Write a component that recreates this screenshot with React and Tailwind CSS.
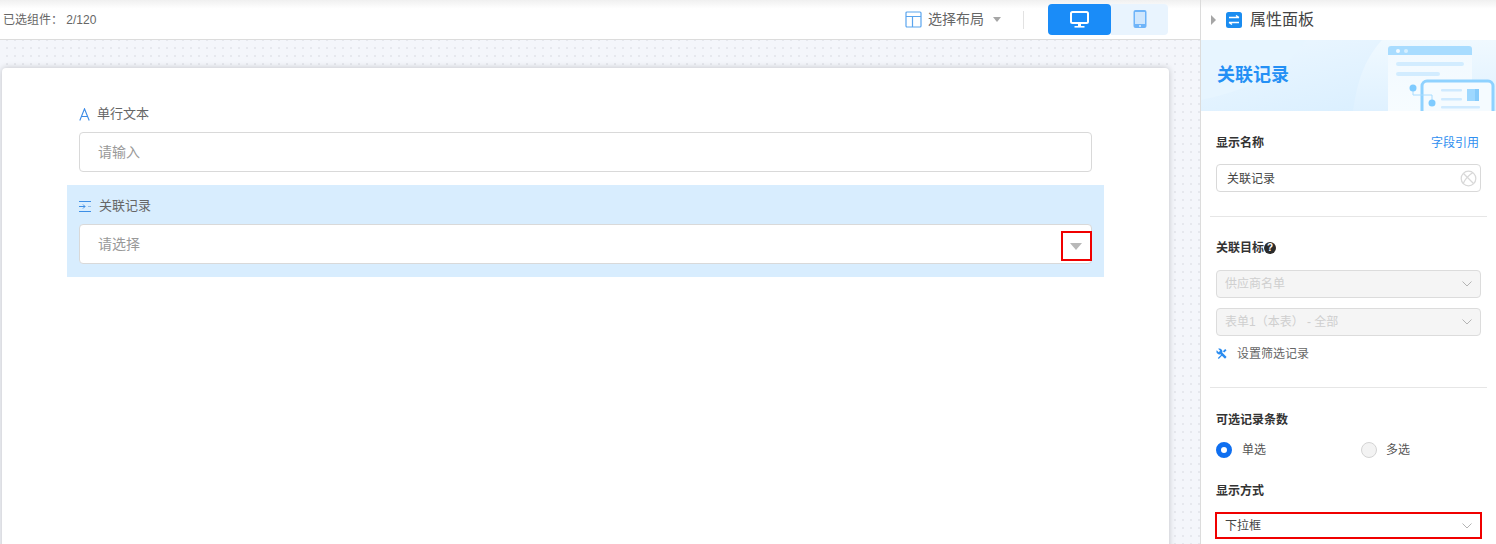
import React from "react";

const Chevron = () => (
  <svg width="10" height="6" viewBox="0 0 10 6" fill="none" stroke="#b4b4b4" strokeWidth="1">
    <path d="M0.5 0.5l4.5 4.5 4.5-4.5" />
  </svg>
);

const DisabledSelect = ({ text, className = "" }) => (
  <div className={"flex h-[28px] items-center justify-between rounded-[4px] border border-[#dcdcdc] bg-[#f5f5f5] pl-[8px] pr-[8px] text-[12px] text-[#cfcfcf] " + className}>
    <span>{text}</span>
    <Chevron />
  </div>
);

const Label = ({ children, className = "" }) => (
  <div className={"flex h-[18px] items-center text-[12px] font-bold leading-[18px] text-[#333] " + className}>{children}</div>
);

const Field = ({ icon, label, placeholder, active, labelGap, children }) => (
  <div className={"relative w-[1037px] pt-[12px] pb-[13px] px-[12px] " + (active ? "bg-[#d8edfe]" : "")}>
    <div className="mb-[9px] flex h-[18px] items-center text-[13px] text-[#666]">
      <span className={"flex w-[14px] justify-start " + labelGap}>{icon}</span>
      <span>{label}</span>
    </div>
    <div className="relative flex h-[40px] items-center rounded-[4px] border border-[#d9d9d9] bg-white pl-[18px] text-[14px] text-[#999]">
      {placeholder}
      {children}
    </div>
  </div>
);

function Banner() {
  return (
    <div className="relative h-[71px] overflow-hidden bg-[#e3f3ff]">
      <svg className="absolute inset-0" width="295" height="71" viewBox="0 0 295 71">
        <defs>
          <linearGradient id="bgA" x1="0" y1="0" x2="0" y2="1">
            <stop offset="0" stopColor="#f0f9ff" />
            <stop offset="1" stopColor="#dff1ff" />
          </linearGradient>
          <linearGradient id="bgB" x1="0" y1="0" x2="1" y2="1">
            <stop offset="0" stopColor="#edf7ff" />
            <stop offset="1" stopColor="#d5edff" />
          </linearGradient>
          <linearGradient id="win" x1="0" y1="0" x2="0" y2="1">
            <stop offset="0" stopColor="#f1f9ff" />
            <stop offset="1" stopColor="#f7fcff" />
          </linearGradient>
        </defs>
        <rect width="295" height="71" fill="url(#bgB)" />
        <path d="M0 0H105C85 30 55 48 0 60Z" fill="#e7f5ff" />
        <path d="M181 0H295V71H152C156 42 163 20 181 0Z" fill="url(#bgA)" />
        <path d="M187 9a3 3 0 0 1 3-3h78a3 3 0 0 1 3 3v62h-84z" fill="url(#win)" />
        <path d="M187 15V9a3 3 0 0 1 3-3h78a3 3 0 0 1 3 3v6z" fill="#a8dcff" />
        <circle cx="197" cy="11" r="2" fill="#f2faff" />
        <circle cx="205" cy="11" r="2" fill="#d6effF" />
        <rect x="195" y="22" width="68" height="4" rx="2" fill="#d2ecff" />
        <rect x="195" y="32" width="44" height="4" rx="2" fill="#d2ecff" />
        <path d="M221 75V46a5 5 0 0 1 5-5h61a5 5 0 0 1 5 5v29" fill="#f5fbff" stroke="#8fd2ff" strokeWidth="3" />
        <rect x="240" y="49" width="21" height="2.5" rx="1" fill="#cfeaff" />
        <rect x="240" y="58" width="21" height="2.5" rx="1" fill="#cfeaff" />
        <rect x="240" y="66" width="39" height="2.5" rx="1" fill="#cfeaff" />
        <rect x="266" y="49" width="12" height="12" fill="#9ed8ff" />
        <rect x="274" y="49" width="4" height="12" fill="#86cbfb" />
        <path d="M212 48v7h19v8" fill="none" stroke="#a8dcff" strokeWidth="1" />
        <circle cx="212" cy="48" r="3.5" fill="#7fcbff" />
        <circle cx="231" cy="63" r="3.5" fill="#7fcbff" />
      </svg>
      <div className="relative flex h-full items-center pl-[16px] text-[18px] font-bold text-[#2490f5]">关联记录</div>
    </div>
  );
}

export default function App() {
  return (
    <div className="flex h-[544px] w-[1496px] overflow-hidden bg-white font-['Liberation_Sans','Noto_Sans_CJK_SC',sans-serif]">
      {/* main */}
      <div className="flex w-[1200px] flex-col overflow-hidden">
        <div className="flex h-[40px] shrink-0 items-center justify-between border-b border-[#dcdcdc] bg-gradient-to-b from-[#f0f0f0] via-white via-[22%] to-white pl-[3px] pr-[32px]">
          <div className="text-[12px] text-[#666]">已选组件：&nbsp;2/120</div>
          <div className="flex items-center">
            <svg width="17" height="17" viewBox="0 0 17 17" fill="none" stroke="#5aa5ee" strokeWidth="1.2">
              <rect x="1" y="1" width="15" height="15" rx="1" />
              <path d="M1 5.5h15M7.5 5.5V16" />
            </svg>
            <span className="ml-[6px] text-[14px] text-[#666]">选择布局</span>
            <span className="ml-[9px] h-0 w-0 border-x-[4.5px] border-t-[5px] border-x-transparent border-t-[#a6a6a6]" />
            <span className="ml-[22px] mr-[24px] h-[18px] w-px bg-[#e2e2e2]" />
            <div className="mt-[-1px] flex h-[31px]">
              <div className="flex w-[63px] items-center justify-center rounded-[4px] bg-[#1a8cf8]">
                <svg width="19" height="17" viewBox="0 0 19 17" fill="none">
                  <rect x="1" y="1" width="17" height="11" rx="1.5" stroke="#fff" strokeWidth="2" />
                  <rect x="4.5" y="15" width="10" height="1.6" fill="#fff" />
                  <rect x="8" y="12" width="3" height="3.5" fill="#fff" />
                </svg>
              </div>
              <div className="flex w-[57px] items-center justify-center rounded-r-[4px] bg-[#e9f4fe]">
                <svg width="14" height="18" viewBox="0 0 14 18">
                  <rect x="0.5" y="0" width="13" height="18" rx="2" fill="#6fb4f9" />
                  <rect x="2" y="2" width="10" height="12" fill="#cfe6fd" />
                  <circle cx="7" cy="16" r="1" fill="#dff0ff" />
                </svg>
              </div>
            </div>
          </div>
        </div>
        <div className="min-h-0 flex-1 overflow-hidden bg-[#f4f6fb] bg-[radial-gradient(#e6e8ee_1px,transparent_1px)] bg-[length:8px_8px] bg-[position:3px_4px] pl-[2px] pr-[31px] pt-[28px]">
          <div className="h-[600px] rounded-[4px] bg-white pl-[65px] pt-[25px] shadow-[0_0_6px_rgba(0,0,0,0.22)]">
            <Field
              label="单行文本"
              placeholder="请输入"
              labelGap="mr-[4px]"
              icon={
                <svg width="11" height="13" viewBox="0 0 11 13" fill="none" stroke="#3b8ae6" strokeWidth="1.1">
                  <path d="M0.8 12.5L5.5 0.8l4.7 11.7M2.5 8.5h6" />
                </svg>
              }
            />
            <Field
              active
              label="关联记录"
              placeholder="请选择"
              labelGap="mr-[6px]"
              icon={
                <svg width="12" height="11" viewBox="0 0 12 11" fill="none" stroke="#3d8fe6" strokeWidth="1">
                  <path d="M0 0.5h12M0 10.5h12M0 5.5h6M4 3.5l2 2-2 2" />
                  <path d="M9 5.5h3" stroke="#8fbdec" />
                </svg>
              }
            >
              <div className="absolute right-[-1px] top-[6px] flex h-[30px] w-[31px] items-center justify-center border-2 border-[#f00000]">
                <span className="mr-[1px] h-0 w-0 border-x-[6.5px] border-t-[7px] border-x-transparent border-t-[#b8b8b8]" />
              </div>
            </Field>
          </div>
        </div>
      </div>

      {/* panel */}
      <div className="w-[296px] border-l border-[#dcdcdc]">
        <div className="flex h-[40px] items-center bg-gradient-to-b from-[#f0f0f0] via-white via-[22%] to-white pl-[10px]">
          <span className="h-0 w-0 border-y-[5px] border-l-[5px] border-y-transparent border-l-[#a6a6a6]" />
          <svg className="ml-[10px]" width="16" height="16" viewBox="0 0 16 16">
            <rect width="16" height="16" rx="2.5" fill="#1a8cf0" />
            <path d="M3 5.5h10M10 3.5l3 2M13 10.5H3M6 12.5l-3-2" fill="none" stroke="#fff" strokeWidth="1.5" />
          </svg>
          <span className="ml-[8px] text-[16px] text-[#444]">属性面板</span>
        </div>
        <Banner />
        <div className="px-[15px]">
          <div className="mt-[23px] flex h-[18px] items-center justify-between">
            <Label>显示名称</Label>
            <span className="mr-[2px] text-[12px] text-[#2f8ff0]">字段引用</span>
          </div>
          <div className="mt-[12px] flex h-[28px] items-center justify-between rounded-[4px] border border-[#d9d9d9] pl-[10px] pr-[3px] text-[12px] text-[#444]">
            <span className="pt-[2px]">关联记录</span>
            <svg width="17" height="17" viewBox="0 0 17 17" fill="none" stroke="#d8d8d8" strokeWidth="1.3">
              <circle cx="8.5" cy="8.5" r="7.3" />
              <path d="M3.5 3.5l10 10M13 2.5C9 5 5 9 3 14" />
            </svg>
          </div>
          <div className="mx-[-6px] mt-[24px] h-px bg-[#e6e6e6]" />

          <Label className="mt-[22px]">
            关联目标
            <span className="flex h-[12px] w-[12px] items-center justify-center rounded-full bg-[#2b2b2b] text-[10px] font-bold leading-none text-white">?</span>
          </Label>
          <DisabledSelect className="mt-[13px]" text="供应商名单" />
          <DisabledSelect className="mt-[10px]" text="表单1（本表） - 全部" />
          <div className="mt-[8px] flex h-[18px] items-center text-[12px] text-[#666]">
            <svg width="11" height="11" viewBox="0 0 24 24" fill="#2a8cf0">
              <path d="M22.7 19l-9.1-9.1c.9-2.3.4-5-1.5-6.9-2-2-5-2.4-7.4-1.3L9 6 6 9 1.6 4.7C.4 7.1.9 10.1 2.9 12.1c1.9 1.9 4.6 2.4 6.9 1.5l9.1 9.1c.4.4 1 .4 1.4 0l2.3-2.3c.5-.4.5-1.1.1-1.4z" />
              <path d="M4 22l8-8 2 2-8 8zM15 7l5-5 3 3-5 5z" />
            </svg>
            <span className="ml-[10px] pt-[2px]">设置筛选记录</span>
          </div>
          <div className="mx-[-6px] mt-[25px] h-px bg-[#e6e6e6]" />

          <Label className="mt-[22px] pt-[2px]">可选记录条数</Label>
          <div className="mt-[13px] flex h-[18px] items-center text-[12px] text-[#555]">
            <div className="flex w-[145px] items-center">
              <span className="h-[16px] w-[16px] rounded-full border-[5px] border-[#0f6ff0] bg-white" />
              <span className="ml-[10px]">单选</span>
            </div>
            <div className="flex items-center">
              <span className="h-[16px] w-[16px] rounded-full border border-[#d4d4d4] bg-[#f3f3f3]" />
              <span className="ml-[9px]">多选</span>
            </div>
          </div>

          <Label className="mt-[23px]">显示方式</Label>
          <div className="mx-[-1px] mt-[12px] flex h-[27px] items-center justify-between border-2 border-[#f00000] pl-[8px] pr-[8px] text-[12px] text-[#444]">
            <span>下拉框</span>
            <Chevron />
          </div>
        </div>
      </div>
    </div>
  );
}
